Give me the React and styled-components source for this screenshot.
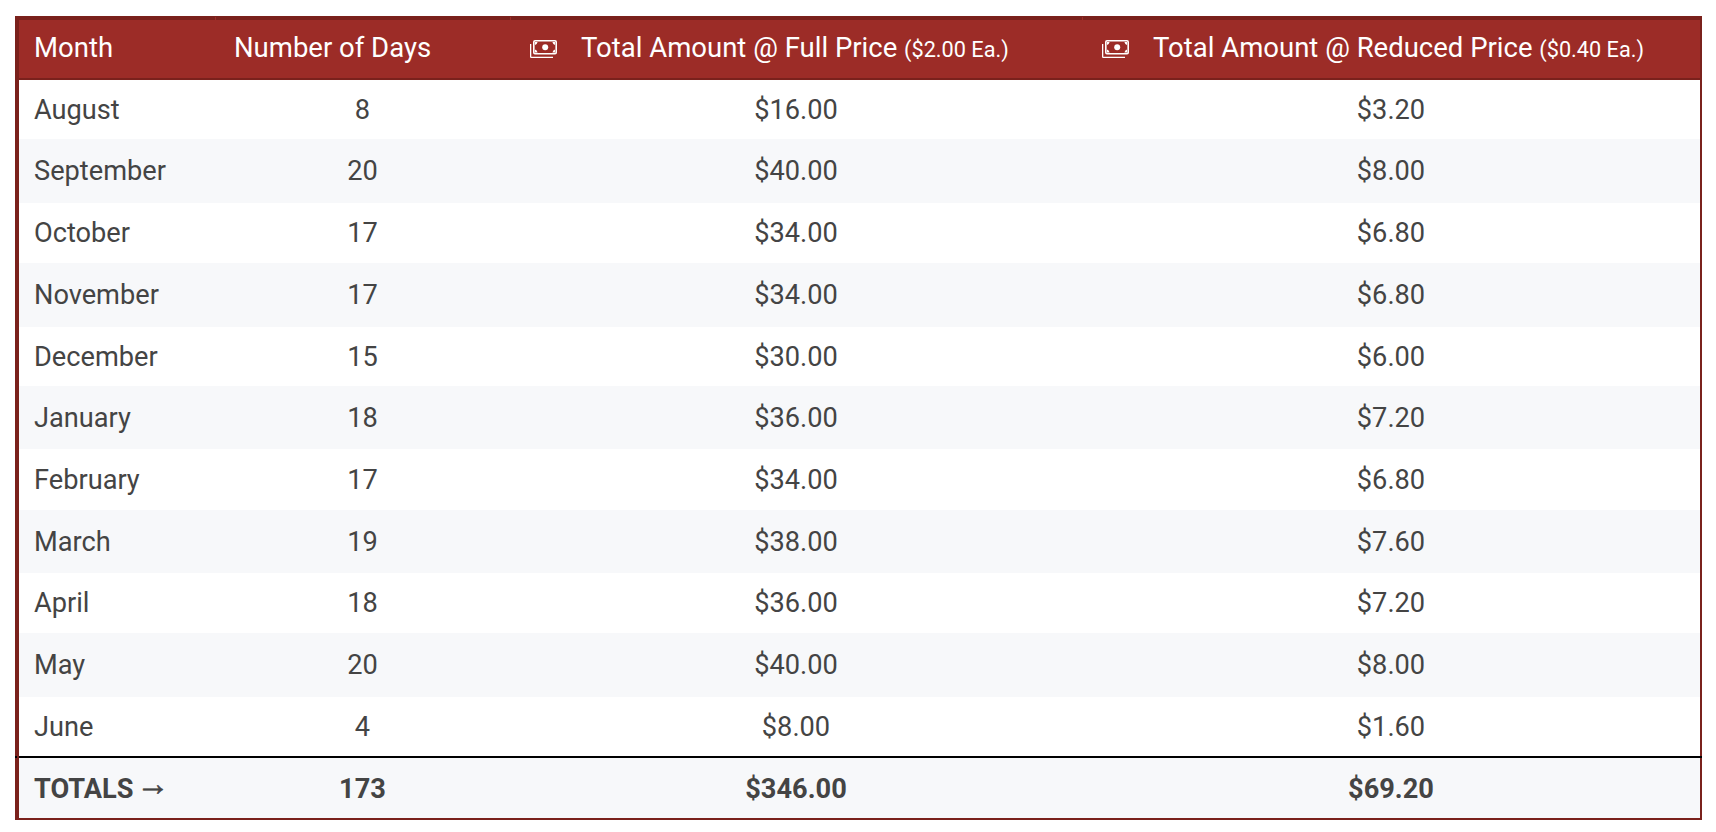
import React from "react";
import styled, { createGlobalStyle } from "styled-components";

const Global = createGlobalStyle`
  html, body { margin: 0; padding: 0; background: #fff; }
  body { font-family: Roboto, "Liberation Sans", sans-serif; }
`;

const Page = styled.div`
  padding: 16px 14px 0 15px;
`;

const Table = styled.table`
  width: 100%;
  table-layout: fixed;
  border-collapse: separate;
  border-spacing: 0;
  border: solid #7a211c;
  border-width: 4px 2px 2px 4px;
  box-sizing: border-box;
  color: #444;
  font-size: 27.2px;
`;

const HeadCell = styled.th`
  position: relative;
  height: 54px;
  padding: 0 0 4px ${(p) => p.$pad}px;
  background: #9c2c27;
  border-bottom: 2px solid #7a211c;
  color: #fff;
  font-size: 27.5px;
  font-weight: 400;
  text-align: left;
  white-space: nowrap;

  &::before {
    content: ${(p) => (p.$tick ? '""' : "none")};
    position: absolute;
    left: 0;
    top: -3px;
    width: 1px;
    height: 3px;
    background: #9c2c27;
  }
`;

const Small = styled.span`
  font-size: 21.7px;
`;

const Row = styled.tr`
  background: ${(p) => (p.$shade ? "#f7f8fa" : "#fff")};
`;

const Cell = styled.td`
  height: ${(p) => p.$h}px;
  padding: 0 0 0 ${(p) => (p.$left ? 15 : 0)}px;
  text-align: ${(p) => (p.$left ? "left" : "center")};
`;

const TotalCell = styled.td`
  position: relative;
  height: 58px;
  padding: 2px 0 0 ${(p) => (p.$left ? 15 : 0)}px;
  text-align: ${(p) => (p.$left ? "left" : "center")};
  font-weight: 700;
  border-top: 2px solid #000;
`;

const LineEnd = styled.span`
  position: absolute;
  top: -2px;
  ${(p) => (p.$right ? "right: -2px;" : "left: -4px;")}
  width: 2px;
  height: 2px;
  background: #000;
`;

const Arrow = styled.span`
  font-family: "Liberation Sans", sans-serif;
  font-weight: 700;
  font-size: 33px;
  line-height: 0;
  vertical-align: 3px;
  margin-left: -4px;
  -webkit-text-stroke: 0.6px #444;
`;

const HeadIcon = styled.svg`
  width: 27px;
  height: 19px;
  vertical-align: -2px;
  margin-right: 24px;
`;

const Money = () => (
  <HeadIcon viewBox="0 0 27 19" fill="#fff">
    <path
      fillRule="evenodd"
      d="M5 0h20a2 2 0 0 1 2 2v10.5a2 2 0 0 1-2 2H5a2 2 0 0 1-2-2V2a2 2 0 0 1 2-2zM5 1.6a.4.4 0 0 0-.4.4v10.5a.4.4 0 0 0 .4.4h20a.4.4 0 0 0 .4-.4V2a.4.4 0 0 0-.4-.4z"
    />
    <path d="M5 2h2.6Q7 4.6 5 5zM25 2h-2.6Q23 4.6 25 5zM5 12.5h2.6Q7 9.9 5 9.5zM25 12.5h-2.6Q23 9.9 25 9.5z" />
    <circle cx="15.2" cy="7.2" r="3" />
    <path d="M0 4h1.3v12.7H23V18H1.3A1.3 1.3 0 0 1 0 16.7z" />
  </HeadIcon>
);

const data = [
  ["August", "8", "$16.00", "$3.20", 59],
  ["September", "20", "$40.00", "$8.00", 64],
  ["October", "17", "$34.00", "$6.80", 60],
  ["November", "17", "$34.00", "$6.80", 64],
  ["December", "15", "$30.00", "$6.00", 59],
  ["January", "18", "$36.00", "$7.20", 63],
  ["February", "17", "$34.00", "$6.80", 61],
  ["March", "19", "$38.00", "$7.60", 63],
  ["April", "18", "$36.00", "$7.20", 60],
  ["May", "20", "$40.00", "$8.00", 64],
  ["June", "4", "$8.00", "$1.60", 59],
];

export default function App() {
  return (
    <Page>
      <Global />
      <Table>
        <colgroup>
          <col style={{ width: 196 }} />
          <col style={{ width: 295 }} />
          <col style={{ width: 572 }} />
          <col style={{ width: 618 }} />
        </colgroup>
        <thead>
          <tr>
            <HeadCell $pad={15}>Month</HeadCell>
            <HeadCell $pad={19} $tick>Number of Days</HeadCell>
            <HeadCell $pad={20} $tick>
              <Money />
              Total Amount @ Full Price <Small>($2.00 Ea.)</Small>
            </HeadCell>
            <HeadCell $pad={20} $tick>
              <Money />
              Total Amount @ Reduced Price <Small>($0.40 Ea.)</Small>
            </HeadCell>
          </tr>
        </thead>
        <tbody>
          {data.map(([m, d, f, r, h], i) => (
            <Row key={m} $shade={i % 2 === 1}>
              <Cell $left $h={h}>{m}</Cell>
              <Cell $h={h}>{d}</Cell>
              <Cell $h={h}>{f}</Cell>
              <Cell $h={h}>{r}</Cell>
            </Row>
          ))}
          <Row $shade>
            <TotalCell $left>
              <LineEnd />
              TOTALS <Arrow>→</Arrow>
            </TotalCell>
            <TotalCell>173</TotalCell>
            <TotalCell>$346.00</TotalCell>
            <TotalCell>
              <LineEnd $right />
              $69.20
            </TotalCell>
          </Row>
        </tbody>
      </Table>
    </Page>
  );
}
